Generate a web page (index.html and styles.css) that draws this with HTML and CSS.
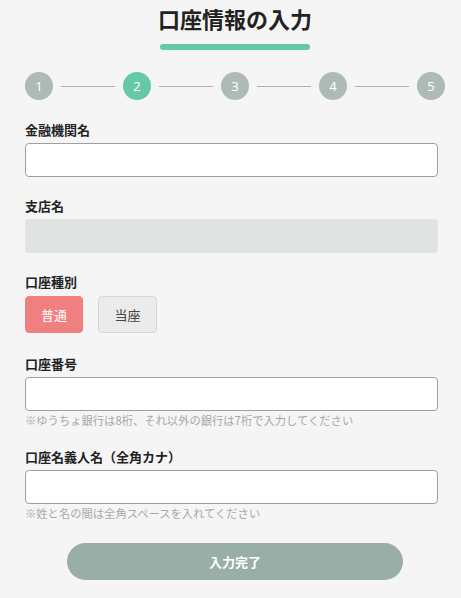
FILE: index.html
```html
<!DOCTYPE html>
<html lang="ja">
<head>
<meta charset="utf-8">
<title>口座情報の入力</title>
<link rel="stylesheet" href="styles.css">
</head>
<body>
<div class="page">
  <header class="head">
    <h1 class="title">口座情報の入力</h1>
    <div class="title-bar"></div>
  </header>
  <div class="steps">
    <span class="step">1</span><span class="step-line"></span>
    <span class="step active">2</span><span class="step-line"></span>
    <span class="step">3</span><span class="step-line"></span>
    <span class="step">4</span><span class="step-line"></span>
    <span class="step">5</span>
  </div>
  <form class="form">
    <div class="field">
      <label class="label">金融機関名</label>
      <input class="input" type="text">
    </div>
    <div class="field">
      <label class="label">支店名</label>
      <input class="input disabled" type="text" disabled>
    </div>
    <div class="field field-types">
      <label class="label">口座種別</label>
      <div class="types">
        <button type="button" class="type selected">普通</button>
        <button type="button" class="type">当座</button>
      </div>
    </div>
    <div class="field">
      <label class="label">口座番号</label>
      <input class="input" type="text">
      <p class="note">※ゆうちょ銀行は8桁、それ以外の銀行は7桁で入力してください</p>
    </div>
    <div class="field">
      <label class="label">口座名義人名（全角カナ）</label>
      <input class="input" type="text">
      <p class="note">※姓と名の間は全角スペースを入れてください</p>
    </div>
    <div class="submit-wrap">
      <button type="button" class="submit">入力完了</button>
    </div>
  </form>
</div>
</body>
</html>
```

FILE: styles.css
```css
* { box-sizing: border-box; }
html, body {
  margin: 0;
  padding: 0;
  background: #f5f5f5;
}
body {
  font-family: "Noto Sans CJK JP", "Noto Sans", sans-serif;
  color: #222;
}
.page {
  padding: 0 23px 0 25px;
}
.head {
  display: flex;
  flex-direction: column;
  align-items: center;
  padding-top: 2px;
  padding-left: 7px;
}
.title {
  margin: 0;
  font-size: 22px;
  line-height: 32px;
  font-weight: 700;
  color: #222;
}
.title-bar {
  width: 150px;
  height: 6px;
  border-radius: 3px;
  background: #66c9a5;
  margin-top: 10px;
}
.steps {
  display: flex;
  align-items: center;
  width: 420px;
  margin-top: 22px;
}
.step {
  width: 28px;
  height: 28px;
  border-radius: 50%;
  background: #aebab5;
  color: #fff;
  font-family: "Noto Sans", sans-serif;
  font-size: 13px;
  display: flex;
  align-items: center;
  justify-content: center;
  flex: none;
}
.step.active { background: #66c9a5; }
.step-line {
  flex: 1;
  height: 1px;
  background: #b0b0b0;
  margin: 0 8px;
}
.form {
  margin-top: 20px;
  display: flex;
  flex-direction: column;
}
.field {
  display: flex;
  flex-direction: column;
  margin-bottom: 19px;
}
.field-types { margin-bottom: 21px; }
.label {
  font-size: 13px;
  line-height: 20px;
  font-weight: 700;
  color: #222;
  margin-bottom: 3px;
}
.input {
  height: 34px;
  width: 100%;
  border: 1px solid #a0a0a0;
  border-radius: 4px;
  background: #fff;
  margin: 0;
  padding: 0 8px;
  font: inherit;
}
.input.disabled {
  background: #dfe3e2;
  border-color: #dfe3e2;
}
.types {
  display: flex;
  gap: 15px;
  margin-top: 1px;
}
.type {
  width: 58px;
  height: 37px;
  border-radius: 4px;
  border: 1px solid #d3d7d6;
  background: #e9eceb;
  color: #444;
  font-family: inherit;
  font-size: 13px;
  padding: 0;
  margin: 0;
}
.type + .type { width: 59px; }
.type.selected {
  background: #f08080;
  border-color: #f08080;
  color: #fff;
}
.note {
  margin: 1px 0 0;
  font-size: 11.3px;
  line-height: 16px;
  color: #a8a8a8;
}
.submit-wrap {
  display: flex;
  justify-content: center;
  padding-left: 7px;
  margin-top: 3px;
}
.submit {
  width: 336px;
  height: 37px;
  border: none;
  border-radius: 19px;
  background: #98aea7;
  color: #fff;
  font-family: inherit;
  font-size: 13px;
  font-weight: 700;
}
```
